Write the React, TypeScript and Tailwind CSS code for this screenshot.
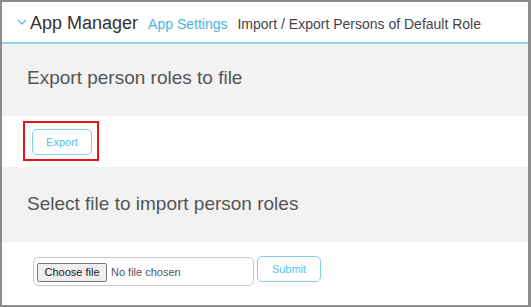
import React from 'react';

const Chevron = () => (
  <svg className="mt-[17px] h-[6px] w-[10px] shrink-0" viewBox="0 0 10 6" fill="none">
    <polyline points="1,1 5,5 9,1" stroke="#5bbfe6" strokeWidth="1.3" />
  </svg>
);

export default function App() {
  return (
    <div className="h-[307px] w-[531px] bg-white font-['Liberation_Sans',Arial,sans-serif]">
      <div className="flex h-full flex-col border-2 border-r-[3px] border-[#8c8c8c]">
        {/* header */}
        <div className="flex h-[42px] shrink-0 items-start border-b-2 border-[#8fd4ee] pl-[15px]">
          <Chevron />
          <div className="ml-[3px] mt-[9px] flex items-baseline gap-[10px] whitespace-nowrap">
            <span className="text-[18px] leading-[24px] text-[#333]">App Manager</span>
            <span className="text-[14px] leading-[20px] text-[#45b5e5]">App Settings</span>
            <span className="text-[14px] leading-[20px] text-[#444]">Import / Export Persons of Default Role</span>
          </div>
        </div>

        {/* export */}
        <div className="h-[72px] shrink-0 bg-[#f2f2f2] pl-[25px] pt-[23px]">
          <h2 className="text-[19px] leading-[22px] text-[#555]">Export person roles to file</h2>
        </div>
        <div className="h-[51px] shrink-0 pl-[21px] pt-[5px]">
          <div className="inline-block border-2 border-[#e8141c] pb-[4px] pl-[7px] pr-[5px] pt-[6px]">
            <button className="flex h-[26px] w-[60px] items-center justify-center rounded-[5px] border border-[#84cfea] text-[11px] text-[#5bbfe6]">
              Export
            </button>
          </div>
        </div>

        {/* import */}
        <div className="h-[75px] shrink-0 bg-[#f2f2f2] pl-[25px] pt-[26px]">
          <h2 className="text-[19px] leading-[22px] text-[#555]">Select file to import person roles</h2>
        </div>
        <div className="flex items-start pl-[31px]">
          <div className="mt-[15px] flex h-[29px] w-[221px] items-center rounded-[5px] border border-[#c8c8c8] pl-[3px] pt-[1px]">
            <span className="flex h-[19px] w-[70px] items-center justify-center rounded-[2px] border border-[#767676] bg-[#efefef] text-[11px] text-[#1a1a1a]">
              Choose file
            </span>
            <span className="ml-[4px] text-[11px] text-[#555]">No file chosen</span>
          </div>
          <button className="ml-[3px] mt-[14px] flex h-[26px] w-[64px] items-center justify-center rounded-[5px] border border-[#84cfea] text-[11px] text-[#5bbfe6]">
            Submit
          </button>
        </div>
      </div>
    </div>
  );
}
